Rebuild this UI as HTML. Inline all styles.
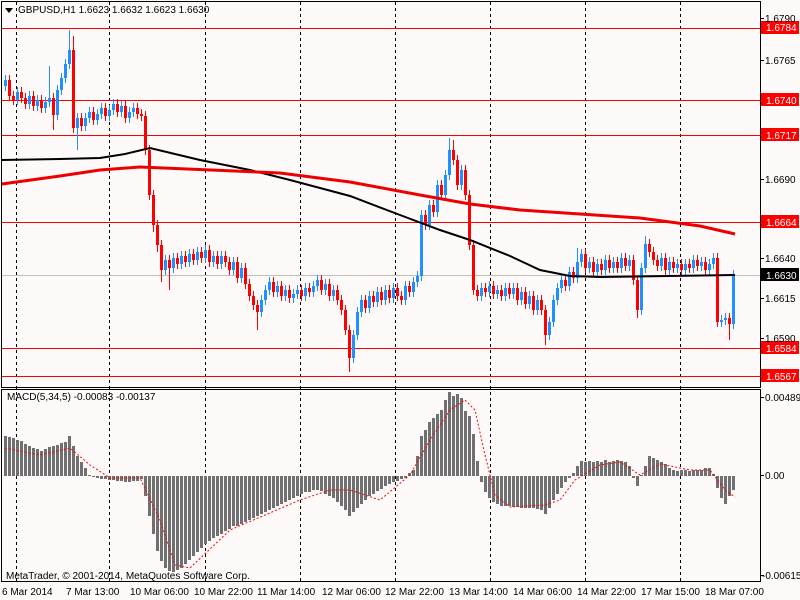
<!DOCTYPE html><html><head><meta charset="utf-8"><style>
html,body{margin:0;padding:0;background:#fffafa;width:800px;height:600px;overflow:hidden}
svg{position:absolute;left:0;top:0}
text{font-family:"Liberation Sans",sans-serif;font-size:10px;fill:#000}
</style></head><body>
<svg width="800" height="600" xmlns="http://www.w3.org/2000/svg">
<rect width="800" height="600" fill="#fffafa"/>
<path d="M16.5 2V581M109.5 2V581M205.5 2V581M300.5 2V581M395.5 2V581M490.5 2V581M585.5 2V581M680.5 2V581" stroke="#000" stroke-dasharray="3,3" fill="none"/>
<path d="M2 28.5H760M2 100.5H760M2 135.5H760M2 222.5H760M2 348.5H760M2 376.5H760" stroke="#f00" fill="none"/>
<line x1="2" x2="760" y1="275.5" y2="275.5" stroke="#c0c0c0"/>
<path fill="none" stroke="#1e90ff" stroke-width="1" d="M5.5 75V91M17.5 87V105M29.5 91V109M37.5 95V111M45.5 97V113M49.5 66V107M57.5 85V120M61.5 73V95M65.5 59V83M69.5 30V69M77.5 113V150M85.5 113V131M89.5 107V123M97.5 109V125M101.5 103V119M109.5 105V121M113.5 99V115M121.5 101V117M129.5 107V123M133.5 103V117M165.5 255V275M173.5 253V273M181.5 251V269M189.5 249V267M197.5 247V265M205.5 245V263M213.5 251V267M221.5 251V269M233.5 257V275M241.5 263V283M261.5 295V317M265.5 285V305M269.5 277V295M277.5 281V297M285.5 285V301M293.5 289V303M297.5 285V299M305.5 283V301M313.5 281V297M317.5 275V291M325.5 279V295M333.5 285V301M353.5 330V363M357.5 307V340M361.5 295V317M369.5 291V313M377.5 287V307M385.5 285V305M393.5 283V303M405.5 281V305M413.5 277V297M417.5 271V287M421.5 210V281M429.5 200V230M437.5 180V217M445.5 170V200M449.5 138V180M461.5 165V190M481.5 283V301M489.5 281V297M497.5 285V299M505.5 283V301M513.5 283V299M521.5 287V305M529.5 291V309M537.5 295V315M549.5 317V340M553.5 295V327M557.5 283V305M561.5 275V293M569.5 267V291M577.5 248V283M581.5 249V267M589.5 257V273M597.5 259V277M605.5 255V275M613.5 257V273M621.5 253V273M629.5 255V271M641.5 263V315M645.5 236V273M661.5 253V271M669.5 257V275M677.5 259V273M685.5 259V275M693.5 255V273M701.5 257V271M709.5 259V275M713.5 253V269M721.5 315V327M725.5 313V325M733.5 270V329"/>
<path fill="none" stroke="#1e90ff" stroke-width="3" d="M5.5 80V86M17.5 92V100M29.5 96V104M37.5 100V106M45.5 102V108M49.5 98V102M57.5 90V115M61.5 78V90M65.5 64V78M69.5 50V64M77.5 118V128M85.5 118V126M89.5 112V118M97.5 114V120M101.5 108V114M109.5 110V116M113.5 104V110M121.5 106V112M129.5 112V118M133.5 108V112M165.5 260V270M173.5 258V268M181.5 256V264M189.5 254V262M197.5 252V260M205.5 250V258M213.5 256V262M221.5 256V264M233.5 262V270M241.5 268V278M261.5 300V312M265.5 290V300M269.5 282V290M277.5 286V292M285.5 290V296M293.5 294V298M297.5 290V294M305.5 288V296M313.5 286V292M317.5 280V286M325.5 284V290M333.5 290V296M353.5 335V358M357.5 312V335M361.5 300V312M369.5 296V308M377.5 292V302M385.5 290V300M393.5 288V298M405.5 286V300M413.5 282V292M417.5 276V282M421.5 215V276M429.5 205V225M437.5 185V212M445.5 175V195M449.5 150V175M461.5 170V185M481.5 288V296M489.5 286V292M497.5 290V294M505.5 288V296M513.5 288V294M521.5 292V300M529.5 296V304M537.5 300V310M549.5 322V335M553.5 300V322M557.5 288V300M561.5 280V288M569.5 272V286M577.5 262V278M581.5 254V262M589.5 262V268M597.5 264V272M605.5 260V270M613.5 262V268M621.5 258V268M629.5 260V266M641.5 268V310M645.5 244V268M661.5 258V266M669.5 262V270M677.5 264V268M685.5 264V270M693.5 260V268M701.5 262V266M709.5 264V270M713.5 258V264M721.5 320V322M725.5 318V320M733.5 275V324"/>
<path fill="none" stroke="#f00" stroke-width="1" d="M9.5 75V101M13.5 91V105M21.5 87V103M25.5 93V109M33.5 91V111M41.5 95V113M53.5 93V130M73.5 36V133M81.5 113V131M93.5 107V125M105.5 103V121M117.5 99V117M125.5 101V123M137.5 103V119M141.5 109V121M145.5 111V155M149.5 145V200M153.5 190V232M157.5 220V252M161.5 240V282M169.5 255V290M177.5 253V269M185.5 251V267M193.5 249V265M201.5 247V263M209.5 245V267M217.5 251V269M225.5 251V267M229.5 257V275M237.5 257V283M245.5 263V289M249.5 279V301M253.5 291V310M257.5 300V330M273.5 277V297M281.5 281V301M289.5 285V303M301.5 285V301M309.5 283V297M321.5 275V295M329.5 279V301M337.5 285V305M341.5 295V315M345.5 305V335M349.5 325V372M365.5 295V313M373.5 291V307M381.5 287V305M389.5 285V303M397.5 283V301M401.5 291V305M409.5 281V297M425.5 210V230M433.5 200V217M441.5 180V200M453.5 140V165M457.5 155V190M465.5 165V200M469.5 190V250M473.5 240V295M477.5 285V301M485.5 283V297M493.5 281V299M501.5 285V301M509.5 283V299M517.5 283V305M525.5 287V309M533.5 291V315M541.5 295V315M545.5 305V345M565.5 275V291M573.5 267V283M585.5 249V273M593.5 257V277M601.5 259V275M609.5 255V273M617.5 257V273M625.5 253V271M633.5 255V285M637.5 275V318M649.5 239V257M653.5 247V265M657.5 255V271M665.5 253V275M673.5 257V273M681.5 259V275M689.5 259V273M697.5 255V271M705.5 257V275M717.5 253V327M729.5 313V340"/>
<path fill="none" stroke="#f00" stroke-width="3" d="M9.5 80V96M13.5 96V100M21.5 92V98M25.5 98V104M33.5 96V106M41.5 100V108M53.5 98V115M73.5 50V128M81.5 118V126M93.5 112V120M105.5 108V116M117.5 104V112M125.5 106V118M137.5 108V114M141.5 114V116M145.5 116V150M149.5 150V195M153.5 195V225M157.5 225V245M161.5 245V270M169.5 260V268M177.5 258V264M185.5 256V262M193.5 254V260M201.5 252V258M209.5 250V262M217.5 256V264M225.5 256V262M229.5 262V270M237.5 262V278M245.5 268V284M249.5 284V296M253.5 296V305M257.5 305V312M273.5 282V292M281.5 286V296M289.5 290V298M301.5 290V296M309.5 288V292M321.5 280V290M329.5 284V296M337.5 290V300M341.5 300V310M345.5 310V330M349.5 330V358M365.5 300V308M373.5 296V302M381.5 292V300M389.5 290V298M397.5 288V296M401.5 296V300M409.5 286V292M425.5 215V225M433.5 205V212M441.5 185V195M453.5 150V160M457.5 160V185M465.5 170V195M469.5 195V245M473.5 245V290M477.5 290V296M485.5 288V292M493.5 286V294M501.5 290V296M509.5 288V294M517.5 288V300M525.5 292V304M533.5 296V310M541.5 300V310M545.5 310V335M565.5 280V286M573.5 272V278M585.5 254V268M593.5 262V272M601.5 264V270M609.5 260V268M617.5 262V268M625.5 258V266M633.5 260V280M637.5 280V310M649.5 244V252M653.5 252V260M657.5 260V266M665.5 258V270M673.5 262V268M681.5 264V270M689.5 264V268M697.5 260V266M705.5 262V270M717.5 258V322M729.5 318V324"/>
<path fill="none" stroke="#000" stroke-width="2" d="M2 160L60 159L100 158L125 154L150 148L200 160L250 170L290 180L350 196L400 215L440 230L470 240L510 256L540 270L570 276L600 277L735 275"/>
<path fill="none" stroke="#e00" stroke-width="3" d="M2 184L60 176L100 170L140 167L280 173L350 182L420 195L470 204L520 210L580 214L640 218L700 226L735 234"/>
<path fill="none" stroke="#707070" stroke-width="3" d="M5.5 476V436M9.5 476V437M13.5 476V438M17.5 476V440M21.5 476V441M25.5 476V444M29.5 476V446M33.5 476V448M37.5 476V449M41.5 476V451M45.5 476V449M49.5 476V447M53.5 476V446M57.5 476V445M61.5 476V443M65.5 476V442M69.5 476V436M73.5 476V446M77.5 476V456M81.5 476V462M85.5 476V468M89.5 476V475M93.5 476V477M97.5 476V478M101.5 476V479M105.5 476V479M109.5 476V480M113.5 476V480M117.5 476V481M121.5 476V481M125.5 476V482M129.5 476V482M133.5 476V481M137.5 476V481M141.5 476V479M145.5 476V496M149.5 476V516M153.5 476V534M157.5 476V551M161.5 476V561M165.5 476V568M169.5 476V571M173.5 476V572M177.5 476V570M181.5 476V568M185.5 476V564M189.5 476V560M193.5 476V556M197.5 476V552M201.5 476V548M205.5 476V544M209.5 476V541M213.5 476V538M217.5 476V536M221.5 476V534M225.5 476V531M229.5 476V529M233.5 476V526M237.5 476V526M241.5 476V524M245.5 476V522M249.5 476V520M253.5 476V518M257.5 476V516M261.5 476V514M265.5 476V512M269.5 476V510M273.5 476V508M277.5 476V506M281.5 476V504M285.5 476V502M289.5 476V500M293.5 476V498M297.5 476V496M301.5 476V494M305.5 476V492M309.5 476V492M313.5 476V490M317.5 476V490M321.5 476V491M325.5 476V494M329.5 476V496M333.5 476V498M337.5 476V502M341.5 476V506M345.5 476V510M349.5 476V516M353.5 476V512M357.5 476V508M361.5 476V504M365.5 476V500M369.5 476V496M373.5 476V494M377.5 476V491M381.5 476V489M385.5 476V486M389.5 476V484M393.5 476V482M397.5 476V481M401.5 476V479M405.5 476V478M409.5 476V473M413.5 476V470M417.5 476V456M421.5 476V436M425.5 476V430M429.5 476V422M433.5 476V418M437.5 476V414M441.5 476V410M445.5 476V400M449.5 476V392M453.5 476V396M457.5 476V394M461.5 476V398M465.5 476V411M469.5 476V416M473.5 476V434M477.5 476V461M481.5 476V482M485.5 476V492M489.5 476V498M493.5 476V502M497.5 476V504M501.5 476V506M505.5 476V506M509.5 476V506M513.5 476V507M517.5 476V507M521.5 476V508M525.5 476V508M529.5 476V508M533.5 476V508M537.5 476V509M541.5 476V510M545.5 476V514M549.5 476V508M553.5 476V500M557.5 476V494M561.5 476V488M565.5 476V482M569.5 476V478M573.5 476V473M577.5 476V466M581.5 476V461M585.5 476V462M589.5 476V461M593.5 476V462M597.5 476V461M601.5 476V462M605.5 476V460M609.5 476V462M613.5 476V461M617.5 476V460M621.5 476V461M625.5 476V462M629.5 476V466M633.5 476V478M637.5 476V486M641.5 476V475M645.5 476V466M649.5 476V456M653.5 476V458M657.5 476V460M661.5 476V462M665.5 476V464M669.5 476V468M673.5 476V470M677.5 476V471M681.5 476V470M685.5 476V470M689.5 476V471M693.5 476V470M697.5 476V470M701.5 476V470M705.5 476V468M709.5 476V468M713.5 476V474M717.5 476V488M721.5 476V498M725.5 476V504M729.5 476V496M733.5 476V490"/>
<path fill="none" stroke="#f00" stroke-width="1" stroke-dasharray="2,2" d="M5 448L40 455L70 448L90 465L110 478L140 478L160 520L175 565L190 568L230 530L300 500L330 490L350 490L380 500L410 475L430 440L450 410L465 400L475 410L485 455L495 495L510 507L545 505L560 500L575 480L600 465L620 462L640 475L660 464L690 470L710 470L725 490L735 497"/>
<rect x="1.5" y="1.5" width="759" height="386" fill="none" stroke="#000"/>
<rect x="1.5" y="389.5" width="759" height="192" fill="none" stroke="#000"/>
<polygon points="5,8 13,8 9,13" fill="#000"/>
<text x="18" y="13">GBPUSD,H1  1.6623 1.6632 1.6623 1.6630</text>
<text x="7" y="400">MACD(5,34,5) -0.00083 -0.00137</text>
<text x="6" y="579">MetaTrader, © 2001-2014, MetaQuotes Software Corp.</text>
<path d="M761 18.5H764M761 60.5H764M761 179.5H764M761 258.5H764M761 298.5H764M761 338.5H764M761 397.5H764M761 475.5H764M761 575.5H764" stroke="#000"/>
<rect x="761" y="21" width="38" height="13" fill="#f00"/><text x="766" y="31" style="fill:#fff">1.6784</text>
<rect x="761" y="93" width="38" height="13" fill="#f00"/><text x="766" y="104" style="fill:#fff">1.6740</text>
<rect x="761" y="128" width="38" height="13" fill="#f00"/><text x="766" y="139" style="fill:#fff">1.6717</text>
<rect x="761" y="215" width="38" height="13" fill="#f00"/><text x="766" y="226" style="fill:#fff">1.6664</text>
<rect x="761" y="268" width="38" height="13" fill="#000"/><text x="766" y="279" style="fill:#fff">1.6630</text>
<rect x="761" y="341" width="38" height="13" fill="#f00"/><text x="766" y="352" style="fill:#fff">1.6584</text>
<rect x="761" y="369" width="38" height="13" fill="#f00"/><text x="766" y="380" style="fill:#fff">1.6567</text>
<text x="765" y="22">1.6790</text><text x="765" y="64">1.6765</text>
<text x="765" y="183">1.6690</text><text x="765" y="262">1.6640</text>
<text x="765" y="302">1.6615</text><text x="765" y="342">1.6590</text>
<text x="765" y="401">0.00489</text><text x="765" y="479">0.00</text><text x="762" y="579">-0.00615</text>
<text x="2" y="595">6 Mar 2014</text><text x="66" y="595">7 Mar 13:00</text>
<text x="130" y="595">10 Mar 06:00</text><text x="194" y="595">10 Mar 22:00</text>
<text x="257" y="595">11 Mar 14:00</text><text x="322" y="595">12 Mar 06:00</text>
<text x="385" y="595">12 Mar 22:00</text><text x="449" y="595">13 Mar 14:00</text>
<text x="513" y="595">14 Mar 06:00</text><text x="577" y="595">14 Mar 22:00</text>
<text x="641" y="595">17 Mar 15:00</text><text x="705" y="595">18 Mar 07:00</text>
</svg>
</body></html>
